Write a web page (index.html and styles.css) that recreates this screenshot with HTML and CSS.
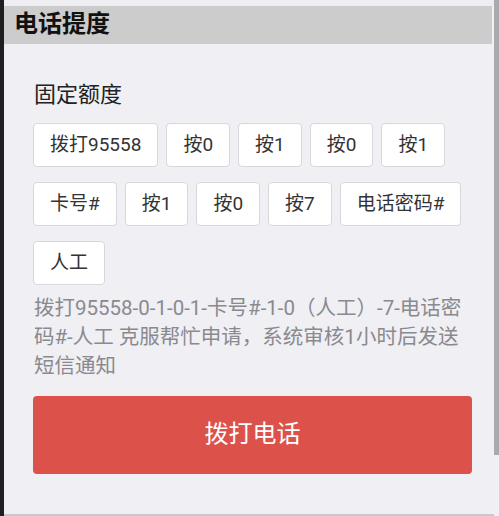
FILE: index.html
```html
<!DOCTYPE html>
<html lang="zh">
<head>
<meta charset="utf-8">
<link rel="stylesheet" href="styles.css">
</head>
<body>
<div class="frame">
  <div class="edge"></div>
  <div class="page">
    <div class="topbar"></div>
    <div class="header">电话提度</div>
    <div class="content">
      <div class="title">固定额度</div>
      <div class="keys">
        <div class="key">拨打95558</div>
        <div class="key">按0</div>
        <div class="key">按1</div>
        <div class="key">按0</div>
        <div class="key">按1</div>
        <div class="key">卡号#</div>
        <div class="key">按1</div>
        <div class="key">按0</div>
        <div class="key">按7</div>
        <div class="key">电话密码#</div>
        <div class="key">人工</div>
      </div>
      <p class="desc">拨打95558-0-1-0-1-卡号#-1-0（人工）-7-电话密码#-人工 克服帮忙申请，系统审核1小时后发送短信通知</p>
      <div class="call">拨打电话</div>
    </div>
  </div>
  <div class="scroll"><div class="thumb"></div></div>
</div>
</body>
</html>
```

FILE: styles.css
```css
html, body {
  margin: 0;
  padding: 0;
  background: #efeff4;
}
body {
  font-family: Roboto, "Noto Sans CJK SC", sans-serif;
}
.frame {
  display: flex;
  width: 499px;
  height: 516px;
  overflow: hidden;
}
.edge {
  width: 4px;
  background: #1f1f21;
  flex: none;
}
.page {
  flex: 1;
  background: #efeff4;
  border-bottom: 2px solid #c9c9cc;
  height: 514px;
}
.topbar {
  height: 6px;
  background: #eeeef2;
}
.header {
  height: 38px;
  line-height: 36px;
  background: #cbcccb;
  margin-right: 2px;
  padding-left: 10px;
  font-size: 24px;
  font-weight: bold;
  color: #111;
}
.content {
  padding: 36px 19px 0 29px;
}
.title {
  font-size: 22px;
  line-height: 30px;
  color: #222;
  padding-left: 1px;
}
.keys {
  display: flex;
  flex-wrap: wrap;
  gap: 15px 8px;
  margin-top: 13px;
  width: 440px;
}
.key {
  height: 42px;
  line-height: 42px;
  padding: 0 16px;
  background: #fff;
  border: 1px solid #d8d8dc;
  border-radius: 4px;
  font-size: 19px;
  color: #333;
}
.desc {
  margin: 9px 0 0 1px;
  font-size: 20.5px;
  line-height: 29px;
  color: #8a8a8e;
  width: 432px;
}
.call {
  margin-top: 15px;
  width: 439px;
  height: 78px;
  line-height: 76px;
  background: #dc524b;
  border-radius: 4px;
  text-align: center;
  color: #fff;
  font-size: 24px;
}
.scroll {
  width: 5px;
  flex: none;
  background: #efeff4;
}
.thumb {
  height: 455px;
  background: #aaaaac;
}
```
